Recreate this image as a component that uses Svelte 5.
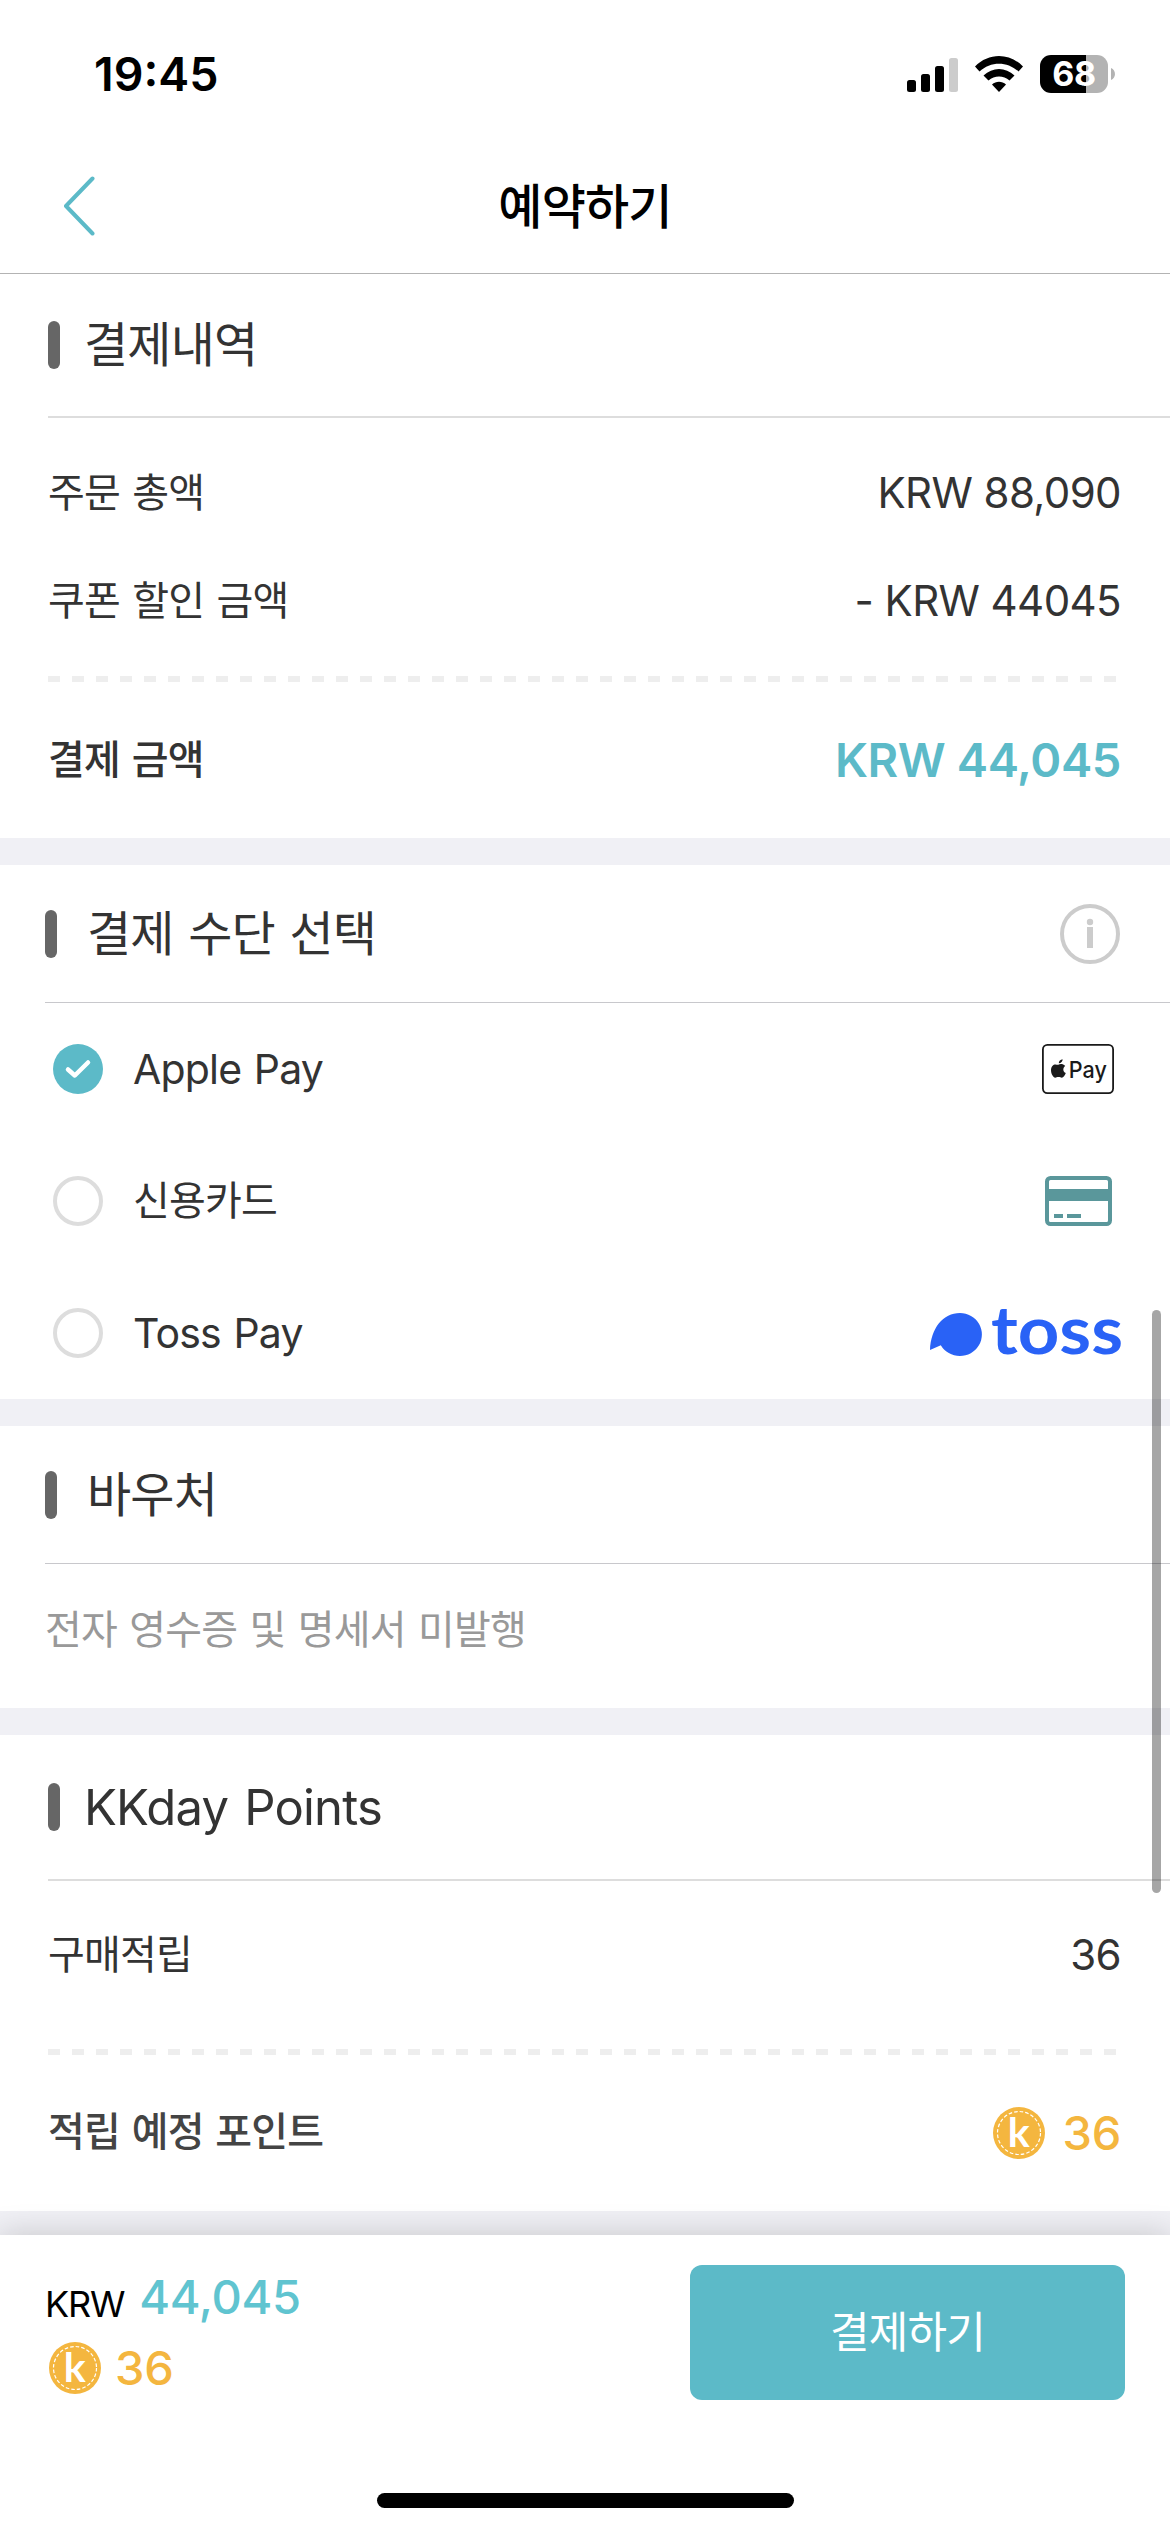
<script lang="ts">
  interface PaymentMethod {
    id: string;
    label: string;
  }

  const methods: PaymentMethod[] = [
    { id: 'apple', label: 'Apple Pay' },
    { id: 'card', label: '신용카드' },
    { id: 'toss', label: 'Toss Pay' }
  ];

  let selected = $state('apple');
</script>

{#snippet coin()}
  <svg class="coin" viewBox="0 0 52 52" aria-hidden="true">
    <circle cx="26" cy="26" r="26" fill="#f4b63f" />
    <circle cx="26" cy="26" r="21.5" fill="none" stroke="#fff" stroke-width="1.2" stroke-dasharray="3.6 2.03" />
    <text class="coin-letter" x="14.7" y="40" textLength="22" lengthAdjust="spacingAndGlyphs">k</text>
  </svg>
{/snippet}

<div class="screen">
  <div class="status-bar">
    <span class="clock">19:45</span>
    <div class="status-icons">
      <svg class="signal" viewBox="0 0 51 36" aria-hidden="true">
        <rect x="0" y="24" width="9" height="12" rx="2.5" />
        <rect x="14" y="18" width="9" height="18" rx="2.5" />
        <rect x="28" y="10" width="9" height="26" rx="2.5" />
        <rect x="42" y="2" width="9" height="34" rx="2.5" fill="#ccc" />
      </svg>
      <svg class="wifi" viewBox="0 0 48 36" aria-hidden="true">
        <path d="M0 10.5C13.5 -3.5 34.5 -3.5 48 10.5L43.5 15.5C32.5 5 15.5 5 4.5 15.5Z" />
        <path d="M8.5 19.5C17.5 10.8 30.5 10.8 39.5 19.5L34.5 24.5C28.5 19 19.5 19 13.5 24.5Z" />
        <path d="M17 28.5C21 24.8 27 24.8 31 28.5L24 36Z" />
      </svg>
      <div class="battery">
        <span class="battery-level">68</span>
        <svg class="battery-tip" viewBox="0 0 4 12" aria-hidden="true"><path d="M0 0C5.3 2 5.3 10 0 12Z" fill="#b3b3b3" /></svg>
      </div>
    </div>
  </div>

  <header class="nav">
    <button class="back" aria-label="뒤로">
      <svg viewBox="0 0 32 60" aria-hidden="true"><path d="M29.5 2.5L3 30L29.5 57.5" /></svg>
    </button>
    <h1>예약하기</h1>
  </header>

  <section>
    <h2 class="heading wide">결제내역</h2>
    <div class="rows summary">
      <div class="row"><span>주문 총액</span><span class="amount">KRW 88,090</span></div>
      <div class="row"><span>쿠폰 할인 금액</span><span class="amount">- KRW 44045</span></div>
      <div class="dashes"></div>
      <div class="row total"><span>결제 금액</span><span class="price">KRW 44,045</span></div>
    </div>
  </section>

  <section>
    <h2 class="heading">
      결제 수단 선택
      <svg class="info" viewBox="0 0 60 60" aria-hidden="true">
        <circle cx="30" cy="30" r="28" fill="none" stroke="#ccc" stroke-width="4" />
        <circle cx="30" cy="18" r="3.2" fill="#ccc" />
        <rect x="27" y="23" width="6" height="21" fill="#ccc" />
      </svg>
    </h2>
    {#each methods as method (method.id)}
      <label class="option">
        <input type="radio" name="method" value={method.id} bind:group={selected} />
        {#if selected === method.id}
          <svg class="radio" viewBox="0 0 50 50" aria-hidden="true">
            <circle cx="25" cy="25" r="25" fill="#5cbac8" />
            <path d="M15 25.5L21.8 31.5L35 18.5" fill="none" stroke="#fff" stroke-width="4.5" stroke-linecap="round" stroke-linejoin="round" />
          </svg>
        {:else}
          <svg class="radio" viewBox="0 0 50 50" aria-hidden="true">
            <circle cx="25" cy="25" r="23" fill="none" stroke="#ddd" stroke-width="4" />
          </svg>
        {/if}
        <span class="option-label" class:latin={method.id !== 'card'}>{method.label}</span>
        {#if method.id === 'apple'}
          <svg class="apple-pay" viewBox="0 0 72 50" role="img" aria-label="Apple Pay">
            <rect x="0.9" y="0.9" width="70.2" height="48.2" rx="4.5" fill="#fff" stroke="#1a1a1a" stroke-width="1.8" />
            <path d="M16.3 20.7C18 19.9 21 19.6 23.2 22C20.5 23.8 20.8 27.7 23.8 29.1C22.9 31.7 21.3 33.7 19.8 33.7C18.6 33.7 18.2 33 16.5 33C14.9 33 14.3 33.7 13.2 33.7C11.4 33.7 9 29.8 9 26.3C9 22.4 11.3 20.4 13.5 20.4C14.8 20.4 15.6 21 16.3 20.7Z" fill="#1a1a1a" />
            <path d="M16.8 19.3C16.7 17.2 18.5 15.4 20.6 15.2C20.8 17.3 18.9 19.3 16.8 19.3Z" fill="#1a1a1a" />
            <text class="pay-text" x="26.8" y="33.5" textLength="38" lengthAdjust="spacingAndGlyphs">Pay</text>
          </svg>
        {:else if method.id === 'card'}
          <svg class="card" viewBox="0 0 67 50" aria-hidden="true">
            <rect x="2" y="2" width="63" height="46" rx="3.5" fill="none" stroke="#5a979b" stroke-width="4" />
            <path d="M2 13H65V25H2ZM9 38H18V42H9ZM22 38H36V42H22Z" fill="#5a979b" />
          </svg>
        {:else}
          <svg class="toss" viewBox="0 0 192 50" role="img" aria-label="toss">
            <path d="M0 42C1 20 13 5 30 5A22 21.5 0 1 1 10.8 37.2Z" fill="#2962f6" />
            <text class="toss-text" x="61" y="46" textLength="132" lengthAdjust="spacingAndGlyphs">toss</text>
          </svg>
        {/if}
      </label>
    {/each}
  </section>

  <section>
    <h2 class="heading">바우처</h2>
    <p class="note">전자 영수증 및 명세서 미발행</p>
  </section>

  <section>
    <h2 class="heading wide points-heading"><span>KKday Points</span></h2>
    <div class="rows">
      <div class="row points"><span>구매적립</span><span class="amount">36</span></div>
      <div class="dashes"></div>
      <div class="row total expected">
        <span class="expected-label">적립 예정 포인트</span>
        <span class="reward">{@render coin()}36</span>
      </div>
    </div>
  </section>

  <footer class="checkout">
    <div class="checkout-row">
      <div class="checkout-sum">
        <div class="sum"><span class="currency">KRW</span><span class="sum-value">44,045</span></div>
        <div class="reward">{@render coin()}36</div>
      </div>
      <button class="pay-button">결제하기</button>
    </div>
    <div class="home-indicator"></div>
  </footer>

  <div class="scrollbar"></div>
</div>

<style>
  :global(body) {
    background: #fff;
  }

  .screen {
    position: relative;
    display: flex;
    flex-direction: column;
    width: 1170px;
    height: 2532px;
    overflow: hidden;
    background: #f0f0f5;
    color: #333;
    font-family: Inter, 'Noto Sans CJK KR', sans-serif;
    font-size: 40px;
    line-height: 1.2;
    letter-spacing: -0.8px;
    word-spacing: 1.8px;
  }

  h1,
  h2,
  p {
    margin: 0;
    font-weight: 400;
  }

  button {
    padding: 0;
    border: 0;
    background: none;
    font: inherit;
    letter-spacing: inherit;
  }

  svg {
    display: block;
    flex: none;
  }

  .status-bar {
    display: flex;
    align-items: center;
    justify-content: space-between;
    box-sizing: border-box;
    height: 148px;
    padding: 0 55px 0 94px;
    background: #fff;
    color: #000;
  }

  .clock {
    padding-top: 1px;
    font-size: 46.5px;
    font-weight: 600;
    letter-spacing: 0;
  }

  .status-icons {
    display: flex;
    align-items: center;
    gap: 17px;
  }

  .signal {
    width: 51px;
    height: 36px;
  }

  .wifi {
    width: 48px;
    height: 36px;
  }

  .battery {
    display: flex;
    align-items: center;
    gap: 3px;
  }

  .battery-level {
    width: 68px;
    border-radius: 11px;
    background: linear-gradient(90deg, #000 46px, #b3b3b3 46px);
    color: #fff;
    font-size: 34px;
    font-weight: 700;
    line-height: 38px;
    letter-spacing: -0.3px;
    text-align: center;
  }

  .battery-tip {
    width: 4px;
    height: 12px;
  }

  .nav {
    display: grid;
    grid-template-columns: 160px 1fr 160px;
    align-items: center;
    height: 125px;
    border-bottom: 1px solid #b3b3b3;
    background: #fff;
  }

  .back {
    display: flex;
    padding: 0 0 9px 63px;
  }

  .back svg {
    width: 32px;
    height: 60px;
    fill: none;
    stroke: #5cbac8;
    stroke-width: 4;
    stroke-linecap: round;
    stroke-linejoin: round;
  }

  h1 {
    padding-bottom: 8px;
    color: #000;
    font-size: 48px;
    font-weight: 500;
    text-align: center;
  }

  section {
    margin-bottom: 27px;
    background: #fff;
  }

  .heading {
    display: flex;
    align-items: center;
    height: 137px;
    margin-left: 45px;
    padding-right: 50px;
    border-bottom: 1px solid #c8c8cc;
    font-size: 48px;
  }

  .heading::before {
    content: '';
    width: 12px;
    height: 48px;
    margin-right: 30px;
    border-radius: 6px;
    background: #666;
  }

  .heading.wide {
    height: 142px;
    margin-left: 48px;
    border-bottom: 2px solid #ddd;
  }

  .heading.wide::before {
    margin-right: 24px;
  }

  .heading.points-heading {
    height: 144px;
    font-size: 49px;
    word-spacing: 3px;
  }

  .points-heading span {
    padding-top: 3px;
  }

  .info {
    width: 60px;
    height: 60px;
    margin-left: auto;
  }

  .rows {
    padding: 0 49px 0 48px;
  }

  .summary {
    padding-top: 21px;
  }

  .row {
    display: flex;
    align-items: center;
    justify-content: space-between;
    height: 108px;
  }

  .amount {
    padding-top: 1px;
    font-size: 42px;
    letter-spacing: -0.6px;
    word-spacing: 0;
  }

  .dashes {
    height: 6px;
    margin: 21px 2px 0 0;
    background: repeating-linear-gradient(90deg, #eee 0 12px, transparent 12px 24px);
  }

  .row.total {
    height: 156px;
    font-weight: 500;
  }

  .row.points {
    height: 147px;
  }

  .expected {
    color: #444;
  }

  .expected-label {
    padding-bottom: 3px;
  }

  .price {
    color: #5cbac8;
    font-size: 47px;
    font-weight: 600;
    letter-spacing: -0.4px;
    word-spacing: 0;
  }

  .option {
    display: flex;
    align-items: center;
    height: 132px;
    padding: 0 48px 0 53px;
  }

  .option input {
    position: absolute;
    opacity: 0;
  }

  .radio {
    width: 50px;
    height: 50px;
    margin-right: 30px;
  }

  .option-label {
    flex: 1;
  }

  .latin {
    padding-top: 2px;
    font-size: 41px;
  }

  .apple-pay {
    width: 72px;
    height: 50px;
    margin-right: 8px;
  }

  .pay-text {
    fill: #1a1a1a;
    font-size: 23px;
    font-weight: 500;
    letter-spacing: 0;
  }

  .card {
    width: 67px;
    height: 50px;
    margin-right: 10px;
  }

  .toss {
    width: 192px;
    height: 50px;
    overflow: visible;
  }

  .toss-text {
    fill: #2962f6;
    font-family: Lato, sans-serif;
    font-size: 66px;
    font-weight: 700;
    letter-spacing: 0;
  }

  .note {
    padding: 0 45px 12px;
    color: #999;
    line-height: 132px;
  }

  .reward {
    display: flex;
    align-items: center;
    color: #f4b63f;
    font-size: 47px;
    font-weight: 500;
    letter-spacing: -0.3px;
  }

  .coin {
    width: 52px;
    height: 52px;
    margin-right: 18px;
  }

  .coin-letter {
    fill: #fff;
    font-family: Lato, sans-serif;
    font-size: 40px;
    font-weight: 700;
    letter-spacing: 0;
  }

  .checkout {
    position: absolute;
    right: 0;
    bottom: 0;
    left: 0;
    display: flex;
    flex-direction: column;
    align-items: center;
    justify-content: space-between;
    box-sizing: border-box;
    height: 297px;
    padding: 30px 45px 24px;
    background: #fff;
    box-shadow: 0 0 30px rgba(0, 0, 0, 0.18);
  }

  .checkout-row {
    display: flex;
    justify-content: space-between;
    width: 100%;
  }

  .sum {
    display: flex;
    align-items: center;
    height: 65px;
    color: #000;
  }

  .currency {
    margin: 14px 15px 0 0;
    font-size: 36px;
    letter-spacing: -1.2px;
  }

  .sum-value {
    color: #60c4d0;
    font-size: 47px;
    font-weight: 500;
    letter-spacing: -0.3px;
  }

  .checkout-sum .reward {
    height: 76px;
    padding-left: 4px;
  }

  .checkout-sum .coin {
    margin-right: 14px;
  }

  .pay-button {
    width: 435px;
    height: 135px;
    border-radius: 12px;
    background: #5cbac8;
    color: #fff;
    font-size: 43px;
  }

  .home-indicator {
    width: 417px;
    height: 15px;
    border-radius: 8px;
    background: #000;
  }

  .scrollbar {
    position: absolute;
    top: 1310px;
    right: 9px;
    width: 9px;
    height: 583px;
    border-radius: 5px;
    background: rgba(0, 0, 0, 0.35);
  }
</style>
